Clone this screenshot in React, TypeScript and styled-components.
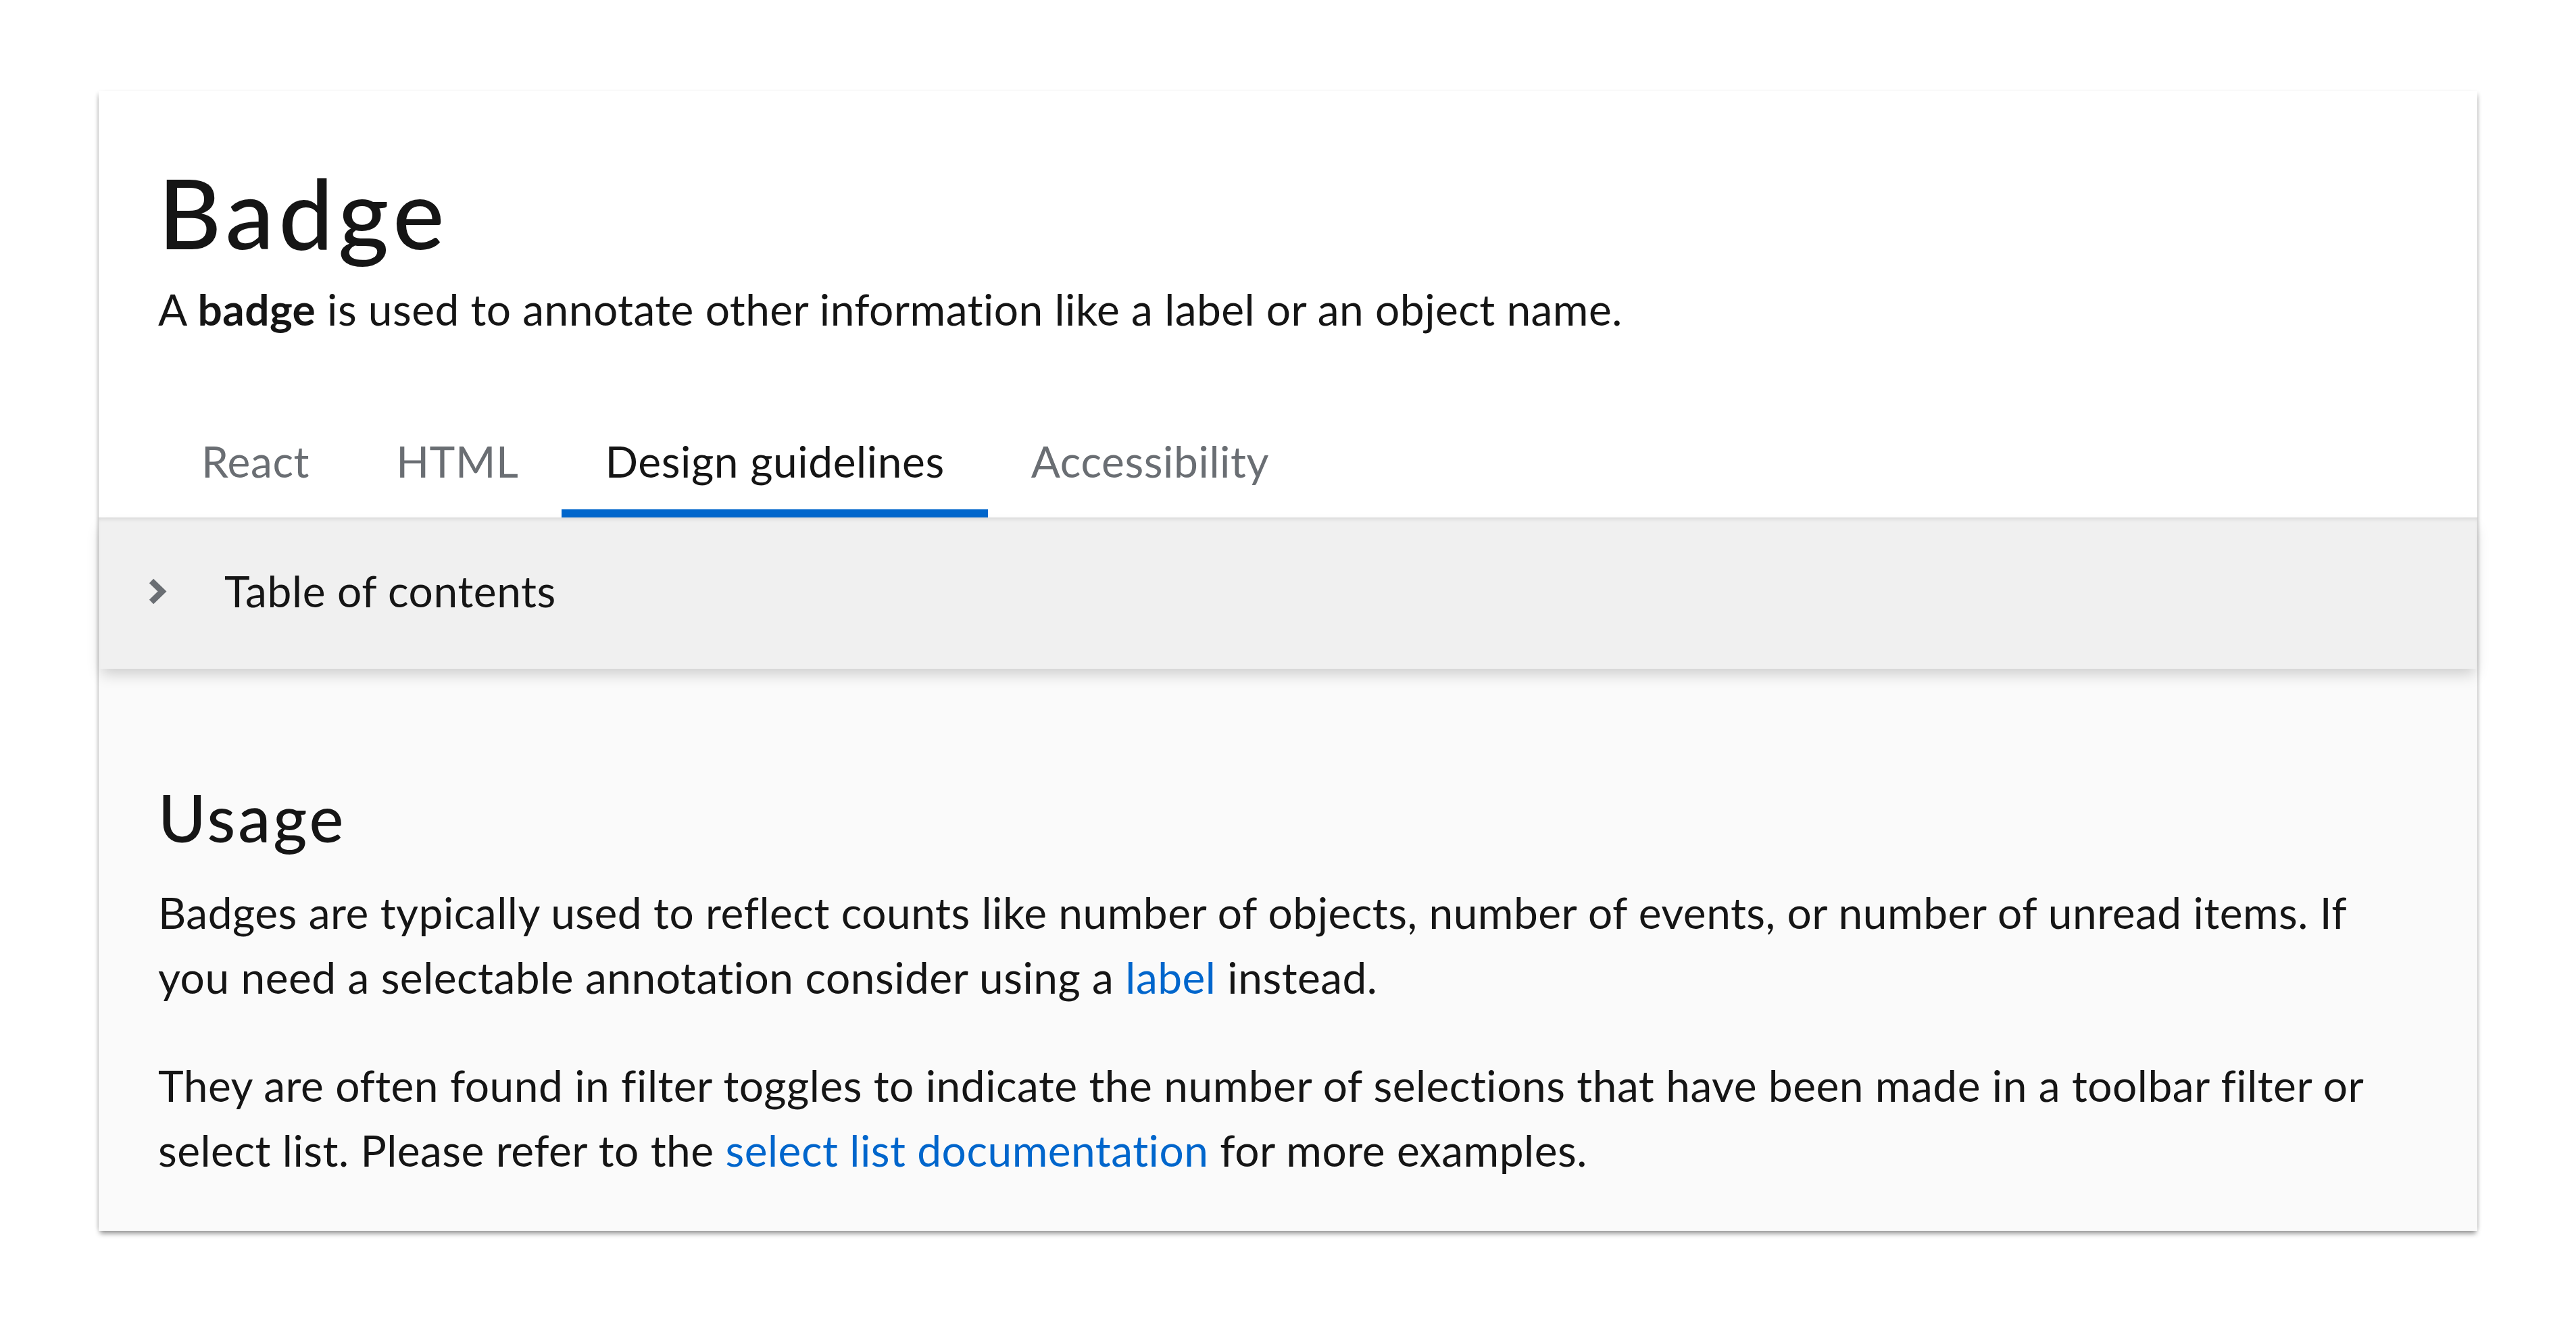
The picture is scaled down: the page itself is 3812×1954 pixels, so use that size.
import React from 'react'
import styled, { createGlobalStyle } from 'styled-components'

const GlobalStyle = createGlobalStyle`
  html, body {
    margin: 0;
    padding: 0;
    background: #ffffff;
  }
  body {
    font-family: Lato, "Liberation Sans", sans-serif;
    color: #151515;
    font-variant-ligatures: none;
    font-feature-settings: "liga" 0, "clig" 0;
    -webkit-font-smoothing: antialiased;
  }
`

const Page = styled.div`
  padding: 135px 146px 40px;
`

const Card = styled.div`
  width: 3520px;
  background: #ffffff;
  box-shadow: 0 6px 7px -2px rgba(3, 3, 3, 0.42), -4px 0 6px -3px rgba(3, 3, 3, 0.14),
    4px 0 6px -3px rgba(3, 3, 3, 0.14);
`

const Header = styled.header`
  padding: 85px 88px 94px;
`

const Title = styled.h1`
  margin: 0;
  font-size: 144px;
  line-height: 188px;
  font-weight: 500;
  letter-spacing: 7px;
`

const Lead = styled.p`
  margin: 2px 0 0;
  font-size: 64px;
  line-height: 96px;
  letter-spacing: 0.45px;

  strong {
    font-weight: 700;
  }
`

const TabList = styled.nav`
  display: flex;
  padding: 0 88px;
`

const Tab = styled.button<{ active?: boolean }>`
  position: relative;
  padding: 35px 64px;
  border: none;
  background: none;
  font-family: inherit;
  font-size: 64px;
  line-height: 96px;
  letter-spacing: 0.6px;
  color: ${(p) => (p.active ? '#151515' : '#6a6e73')};
  cursor: pointer;

  &::after {
    content: '';
    position: absolute;
    left: 0;
    right: 0;
    bottom: 0;
    height: 12px;
    background: ${(p) => (p.active ? '#0066cc' : 'transparent')};
  }
`

const Toc = styled.div`
  position: relative;
  z-index: 1;
  display: flex;
  align-items: center;
  padding: 61px 74px 67px;
  background: #f0f0f0;
  box-shadow: inset 0 5px 6px -3px rgba(3, 3, 3, 0.12),
    0 12px 20px -4px rgba(3, 3, 3, 0.18);
`

const TocToggle = styled.span`
  display: flex;
  width: 27px;
  margin-right: 85px;
`

const TocLabel = styled.span`
  font-size: 64px;
  line-height: 96px;
  letter-spacing: 0.6px;
`

const Body = styled.section`
  padding: 157px 88px 71px;
  background: #fafafa;
`

const SectionTitle = styled.h2`
  margin: 0 0 31px;
  font-size: 96px;
  line-height: 125px;
  font-weight: 500;
  letter-spacing: 4px;
`

const Para = styled.p`
  margin: 0 0 64px;
  font-size: 64px;
  line-height: 96px;
  letter-spacing: 0.5px;

  &:last-child {
    margin-bottom: 0;
  }
`

const Link = styled.a`
  color: #0066cc;
  text-decoration: none;
`

const AngleRight = () => (
  <svg width="27" height="39" viewBox="0 0 27 39">
    <path d="M4 4 L20 19.5 L4 35" fill="none" stroke="#6a6e73" strokeWidth="9" />
  </svg>
)

const tabs = ['React', 'HTML', 'Design guidelines', 'Accessibility']

export default function App() {
  return (
    <>
      <GlobalStyle />
      <Page>
        <Card>
          <Header>
            <Title>Badge</Title>
            <Lead>
              A <strong>badge</strong> is used to annotate other information like a label or an
              object name.
            </Lead>
          </Header>
          <TabList>
            {tabs.map((t) => (
              <Tab key={t} active={t === 'Design guidelines'}>
                {t}
              </Tab>
            ))}
          </TabList>
          <Toc>
            <TocToggle>
              <AngleRight />
            </TocToggle>
            <TocLabel>Table of contents</TocLabel>
          </Toc>
          <Body>
            <SectionTitle>Usage</SectionTitle>
            <Para>
              Badges are typically used to reflect counts like number of objects, number of
              events, or number of unread items. If you need a selectable annotation consider
              using a <Link href="#">label</Link> instead.
            </Para>
            <Para>
              They are often found in filter toggles to indicate the number of selections that
              have been made in a toolbar filter or select list. Please refer to the{' '}
              <Link href="#">select list documentation</Link> for more examples.
            </Para>
          </Body>
        </Card>
      </Page>
    </>
  )
}
